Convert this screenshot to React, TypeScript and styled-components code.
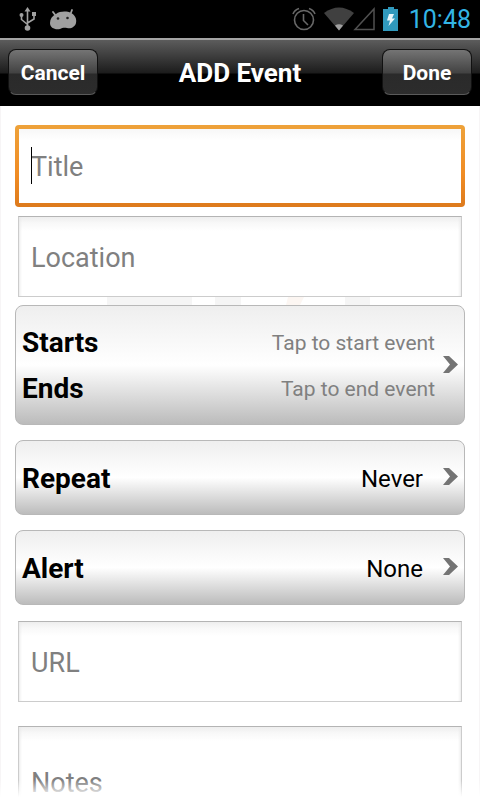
import React from "react";
import styled, { createGlobalStyle } from "styled-components";

const GlobalStyle = createGlobalStyle`
  * { box-sizing: border-box; }
  body { margin: 0; background: #fff; }
  body, button, input, textarea { font-family: Roboto, "Liberation Sans", sans-serif; }
`;

const Screen = styled.div`
  display: flex;
  flex-direction: column;
  height: 100vh;
  overflow: hidden;
`;

const StatusBar = styled.div`
  flex: none;
  display: flex;
  align-items: center;
  justify-content: space-between;
  height: 38px;
  padding: 0 9px 0 19px;
  background: #000;
`;

const StatusGroup = styled.div<{ $gap: number }>`
  display: flex;
  align-items: center;
  gap: ${(p) => p.$gap}px;
`;

const Clock = styled.time`
  margin-left: 2px;
  padding-top: 2px;
  font-size: 25px;
  line-height: 36px;
  color: #33b5e5;
`;

const NavBar = styled.header`
  flex: none;
  display: grid;
  grid-template-columns: 1fr auto 1fr;
  align-items: center;
  height: 68px;
  padding: 0 8px;
  box-shadow: inset 0 2px #a4a4a4;
  background: linear-gradient(#606060 0, #1c1c1c 35px, #000 36px, #000 100%);
`;

const NavTitle = styled.h1`
  margin: 0;
  padding-top: 2px;
  font-size: 26px;
  line-height: 32px;
  font-weight: 700;
  color: #fff;
`;

const NavButton = styled.button<{ $end?: boolean }>`
  justify-self: ${(p) => (p.$end ? "end" : "start")};
  width: 90px;
  height: 46px;
  padding: 2px 0 0;
  border: 1px solid #111;
  border-bottom-color: #5a5a5a;
  border-radius: 8px;
  background: linear-gradient(#747474 0, #424242 23px, #2a2a2a 24px, #2c2c2c 100%);
  font-size: 21px;
  font-weight: 700;
  color: #fff;
`;

const Content = styled.main`
  position: relative;
  flex: 1;
  min-height: 0;
  overflow: hidden;

  &::after {
    content: "";
    position: absolute;
    inset: auto 0 0;
    height: 20px;
    background: linear-gradient(rgba(255, 255, 255, 0), #fff 85%);
    pointer-events: none;
  }
`;

const Form = styled.form`
  display: flex;
  flex-direction: column;
  padding: 19px 14px 0;
  border: solid #f7f5f6;
  border-width: 0 1px;
`;

const FocusFrame = styled.div`
  position: relative;
  height: 82px;
  margin-bottom: 9px;
  border: 4px solid transparent;
  border-radius: 4px;
  background:
    linear-gradient(#f7f7f7, #fff 12px) padding-box,
    linear-gradient(#eea23a, #f08c24 60%, #dd7a1c) border-box;
`;

const Caret = styled.span`
  position: absolute;
  left: 12px;
  top: 18px;
  width: 1px;
  height: 37px;
  background: #000;
`;

const FocusedInput = styled.input`
  display: block;
  width: 100%;
  height: 100%;
  padding: 2px 12px 0;
  border: 0;
  outline: 0;
  background: none;
  caret-color: transparent;
  font-size: 27px;
  &::placeholder { color: #808080; opacity: 1; }
`;

const Field = styled.input`
  display: block;
  height: 81px;
  margin: 0 3px;
  padding: 2px 12px 0;
  border: 1px solid #ccc;
  border-top-color: #b4b4b4;
  border-radius: 0;
  outline: 0;
  background: linear-gradient(#eee, #f8f8f8 6px, #fff 14px);
  box-shadow: inset 3px 0 3px -2px #e8e8e8, inset -3px 0 3px -2px #e8e8e8;
  font-size: 27px;
  &::placeholder { color: #808080; opacity: 1; }
`;

const NotesField = styled(Field).attrs({ as: "textarea" })`
  height: 140px;
  margin-top: 24px;
  padding-top: 38px;
  line-height: 36px;
  resize: none;
`;

const Watermark = styled.svg`
  display: block;
  width: 100%;
  height: 8px;
`;

const Row = styled.button<{ $tall?: boolean }>`
  display: flex;
  align-items: center;
  height: ${(p) => (p.$tall ? 120 : 75)}px;
  margin-bottom: 15px;
  padding: 0 6px;
  border: 1px solid #b8b8b8;
  border-radius: 8px;
  background: linear-gradient(#eee, #fff 50%, #bababa) border-box;
  color: #000;
  text-align: left;
`;

const Lines = styled.span`
  flex: 1;
  display: flex;
  flex-direction: column;
`;

const Line = styled.span`
  display: flex;
  align-items: center;
  justify-content: space-between;
  height: 46px;
  padding-top: 2px;
`;

const RowLabel = styled.span`
  font-size: 28px;
  line-height: 36px;
  font-weight: 700;
`;

const Hint = styled.span`
  margin-right: 8px;
  font-size: 21px;
  color: #808080;
`;

const Value = styled.span`
  margin-right: 20px;
  font-size: 24px;
`;

const UrlSpacer = styled.div`
  height: 1px;
`;

function Chevron() {
  return (
    <svg width="15" height="19" viewBox="0 0 15 19" aria-hidden="true">
      <path d="M0 0H6L15 8.500L6 17H0L7 8.500Z" fill="#747474" />
    </svg>
  );
}

function UsbIcon() {
  return (
    <svg width="18" height="25" viewBox="0 0 18 25" fill="none" stroke="#a0a0a0" strokeWidth="1.600">
      <path d="M8.500 4V21M2.500 9V12.500L8.500 17.500M15 7V12L8.500 16" />
      <path d="M8.500 0L11.500 4.500H5.500Z" fill="#a0a0a0" stroke="none" />
      <circle cx="8.500" cy="21" r="2.800" fill="#a0a0a0" stroke="none" />
      <circle cx="2.500" cy="8" r="2" fill="#a0a0a0" stroke="none" />
      <path d="M13 5H17V9H13Z" fill="#a0a0a0" stroke="none" />
    </svg>
  );
}

function DroidIcon() {
  return (
    <svg width="27" height="21" viewBox="0 0 27 21">
      <path d="M3 3L6 7M22 1L20.500 5" stroke="#a0a0a0" strokeWidth="1.800" strokeLinecap="round" />
      <path d="M6 5C10 2 17 2 21 4C25 6 27 10 26 14C25 18 21 20 17 19C14 18.500 12 19 10 20C5 21 0 19 0 14C0 10 2 7 6 5Z" fill="#a0a0a0" />
      <circle cx="8" cy="9.500" r="1.300" fill="#222" />
      <circle cx="17.500" cy="9" r="1.300" fill="#222" />
    </svg>
  );
}

function AlarmIcon() {
  return (
    <svg width="24" height="24" viewBox="0 0 24 24" fill="none" stroke="#686868" strokeWidth="1.600">
      <circle cx="12" cy="13" r="9.500" />
      <path d="M11.500 7V13.500L16 18M1 7Q2.500 3 7 1.500M17 1.500Q21.500 3 23 7" />
    </svg>
  );
}

function SignalIcon() {
  return (
    <svg width="51" height="24" viewBox="0 0 51 24">
      <path d="M0 6Q15 -5 30 6L15 23.500Z" fill="#404040" />
      <path d="M11 18.500Q15 16 19 18.500L15 23.500Z" fill="#a0a0a0" />
      <path d="M31 22.500L50 2V22.500Z" fill="none" stroke="#505050" strokeWidth="1.500" />
    </svg>
  );
}

function BatteryIcon() {
  return (
    <svg width="16" height="24" viewBox="0 0 16 24">
      <path d="M5 0H11V2H15V24H0V2H5Z" fill="#3099bd" />
      <path d="M6 7H11L9 11.500H12L5.500 19L7 13.500H4Z" fill="#e8f6fb" />
    </svg>
  );
}

export default function App() {
  return (
    <Screen>
      <GlobalStyle />
      <StatusBar>
        <StatusGroup $gap={13}>
          <UsbIcon />
          <DroidIcon />
        </StatusGroup>
        <StatusGroup $gap={8}>
          <AlarmIcon />
          <SignalIcon />
          <BatteryIcon />
          <Clock>10:48</Clock>
        </StatusGroup>
      </StatusBar>
      <NavBar>
        <NavButton type="button">Cancel</NavButton>
        <NavTitle>ADD Event</NavTitle>
        <NavButton type="submit" form="event-form" $end>
          Done
        </NavButton>
      </NavBar>
      <Content>
        <Form id="event-form" onSubmit={(e) => e.preventDefault()}>
          <FocusFrame>
            <FocusedInput aria-label="Title" placeholder="Title" />
            <Caret />
          </FocusFrame>
          <Field aria-label="Location" placeholder="Location" />
          <Watermark viewBox="0 0 450 8" preserveAspectRatio="none" aria-hidden="true">
            <path d="M92 0H177V8H92ZM200 0H226V8H200ZM330 0H355V8H330Z" fill="#f5f5f5" />
            <path d="M273 0H289L285 8H271Z" fill="#fcf6f2" />
          </Watermark>
          <Row type="button" $tall>
            <Lines>
              <Line>
                <RowLabel>Starts</RowLabel>
                <Hint>Tap to start event</Hint>
              </Line>
              <Line>
                <RowLabel>Ends</RowLabel>
                <Hint>Tap to end event</Hint>
              </Line>
            </Lines>
            <Chevron />
          </Row>
          <Row type="button">
            <Lines>
              <Line>
                <RowLabel>Repeat</RowLabel>
                <Value>Never</Value>
              </Line>
            </Lines>
            <Chevron />
          </Row>
          <Row type="button">
            <Lines>
              <Line>
                <RowLabel>Alert</RowLabel>
                <Value>None</Value>
              </Line>
            </Lines>
            <Chevron />
          </Row>
          <UrlSpacer />
          <Field type="url" aria-label="URL" placeholder="URL" />
          <NotesField aria-label="Notes" placeholder="Notes" />
        </Form>
      </Content>
    </Screen>
  );
}
